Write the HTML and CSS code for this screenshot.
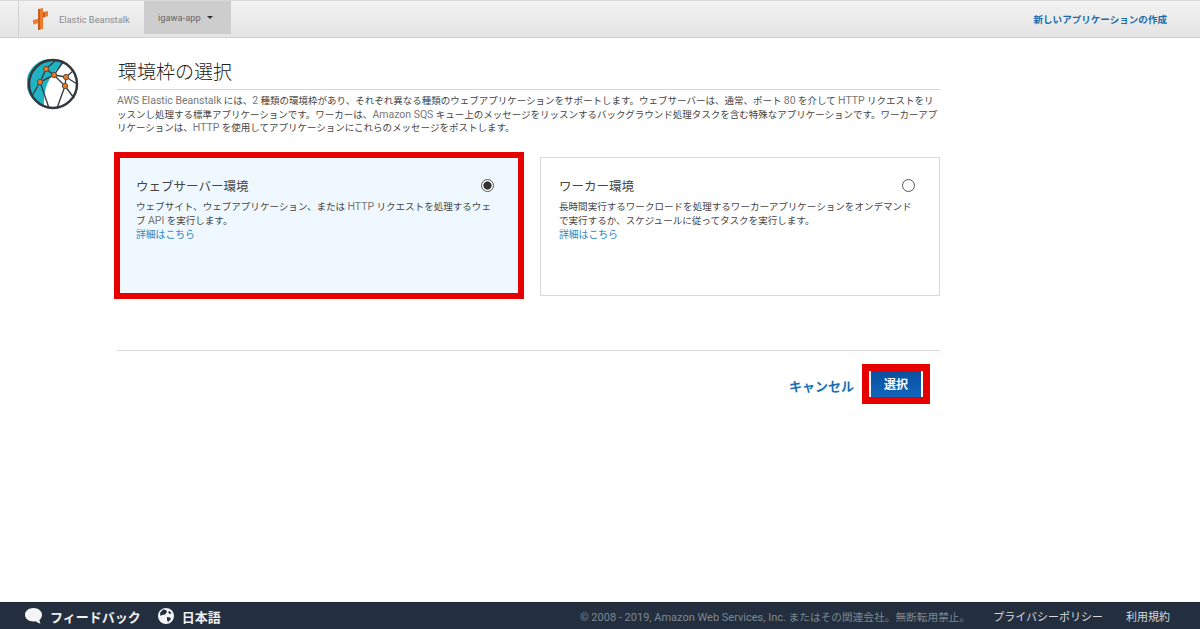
FILE: index.html
```html
<!DOCTYPE html>
<html lang="ja">
<head>
    <meta charset="UTF-8">
    <meta name="viewport" content="width=device-width, initial-scale=1.0">
    <title>環境枠の選択</title>
    <link rel="stylesheet" href="styles.css">
</head>
<body>
    <header class="top-bar">
        <div class="brand">
            <svg class="brand-logo" width="15" height="22" viewBox="0 0 15 22">
                <path fill="#ee7b2e" d="M5 1l5-1v4l5-1v5l-5 1.500V21l-5 1v-7l-4 1.500L0 15v-3l5-1z"/>
                <path fill="#c65f1e" d="M5 1l2 0v20.600L5 22zM10 4l2 .4v4.500L10 9.500z"/>
            </svg>
            <span class="brand-name">Elastic Beanstalk</span>
        </div>
        <div class="app-tab">igawa-app<span class="caret"></span></div>
        <a class="create-link" href="#">新しいアプリケーションの作成</a>
    </header>

    <main class="page">
        <svg class="globe" width="52" height="52" viewBox="0 0 52 52">
            <circle cx="26" cy="26" r="24" fill="#fff"/>
            <path fill="#1fb3c4" d="M37 5A24 24 0 1 0 17 48C17 35 18 20 37 5z"/>
            <g fill="none" stroke="#3a3f44" stroke-width="1.400">
                <path d="M28 3L19 11L27 17L39 19M19 11L13 24L27 17L38 28L39 19L46 13M39 19L50 26M38 28L47 40M38 28L30 50M13 24L5 38M13 24L22 50M27 17L36 4"/>
            </g>
            <circle cx="26" cy="26" r="24" fill="none" stroke="#33383d" stroke-width="2.500"/>
            <g fill="#ee7a22" stroke="#5b4a3a" stroke-width="1">
                <circle cx="19" cy="11" r="2.600"/>
                <circle cx="27" cy="17" r="2.600"/>
                <circle cx="39" cy="19" r="2.600"/>
                <circle cx="13" cy="24" r="2.600"/>
                <circle cx="38" cy="28" r="2.600"/>
            </g>
        </svg>

        <section class="content">
            <h1 class="title">環境枠の選択</h1>
            <p class="intro"><span class="en">AWS Elastic Beanstalk</span> には、<span class="en">2</span> 種類の環境枠があり、それぞれ異なる種類のウェブアプリケーションをサポートします。ウェブサーバーは、通常、ポート <span class="en">80</span> を介して <span class="en">HTTP</span> リクエストをリッスンし処理する標準アプリケーションです。ワーカーは、<span class="en">Amazon SQS</span> キュー上のメッセージをリッスンするバックグラウンド処理タスクを含む特殊なアプリケーションです。ワーカーアプリケーションは、<span class="en">HTTP</span> を使用してアプリケーションにこれらのメッセージをポストします。</p>

            <div class="tiers">
                <div class="tier tier-selected">
                    <div class="tier-head">
                        <h2 class="tier-name">ウェブサーバー環境</h2>
                        <span class="radio radio-on"></span>
                    </div>
                    <p class="tier-text">ウェブサイト、ウェブアプリケーション、または <span class="en">HTTP</span> リクエストを処理するウェブ <span class="en">API</span> を実行します。</p>
                    <a class="tier-link" href="#">詳細はこちら</a>
                </div>
                <div class="tier">
                    <div class="tier-head">
                        <h2 class="tier-name">ワーカー環境</h2>
                        <span class="radio"></span>
                    </div>
                    <p class="tier-text">長時間実行するワークロードを処理するワーカーアプリケーションをオンデマンドで実行するか、スケジュールに従ってタスクを実行します。</p>
                    <a class="tier-link" href="#">詳細はこちら</a>
                </div>
            </div>

            <div class="actions">
                <a class="cancel" href="#">キャンセル</a>
                <button class="select-button">選択</button>
            </div>
        </section>
    </main>

    <footer class="footer">
        <div class="footer-left">
            <span class="footer-item">
                <svg width="17" height="16" viewBox="0 0 17 16"><path fill="#f4f5f6" d="M8.500 0C13 0 17 2.800 17 6.800c0 2.200-1 4-2.600 5.200.2 1.400.6 2.700 1.100 3.600-1.800-.3-3.500-1.200-4.700-2.400-.7.2-1.500.3-2.300.3C3.800 13.500 0 10.800 0 6.800S3.800 0 8.500 0z"/></svg>
                フィードバック
            </span>
            <span class="footer-item">
                <svg width="16" height="16" viewBox="0 0 16 16"><circle cx="8" cy="8" r="8" fill="#f4f5f6"/><path fill="#232f3e" d="M5 1.500l3 .5 1 2-2 2.500-3 .5-1.500 1-.5-3zM9 9l3 .5 1 1.500-3 3-1-2zM11.500 3l2 2.500-2 .5-1.500-2z"/></svg>
                日本語
            </span>
        </div>
        <div class="footer-right">
            <span class="copyright"><span class="en-copy">© 2008 - 2019, Amazon Web Services, Inc.</span> またはその関連会社。無断転用禁止。</span>
            <a class="footer-link" href="#">プライバシーポリシー</a>
            <a class="footer-link" href="#">利用規約</a>
        </div>
    </footer>
</body>
</html>
```

FILE: styles.css
```css
* {
    box-sizing: border-box;
}
body {
    margin: 0;
    height: 100vh;
    display: flex;
    flex-direction: column;
    background: #fff;
    color: #444;
    font-family: Roboto, "Noto Sans CJK JP", sans-serif;
    overflow: hidden;
}
a {
    text-decoration: none;
}
.en {
    font-size: 10.500px;
    color: #777;
}

/* top bar */
.top-bar {
    height: 38px;
    flex: none;
    display: flex;
    align-items: stretch;
    padding-left: 18px;
    background: linear-gradient(#f2f2f2, #e4e4e4);
    border-top: 1px solid #d8d8d8;
    border-bottom: 1px solid #cfcfcf;
}
.brand {
    width: 126px;
    display: flex;
    align-items: center;
    gap: 11px;
    padding-left: 14px;
    border-left: 1px solid #d2d2d2;
}
.brand-name {
    font-size: 9.300px;
    color: #8b8b8b;
}
.app-tab {
    width: 87px;
    margin-bottom: 3px;
    padding-left: 14px;
    display: flex;
    align-items: center;
    gap: 6px;
    font-size: 9.300px;
    color: #666;
    background: #cdcdcd;
}
.caret {
    border: 3.500px solid transparent;
    border-top: 3.500px solid #333;
    border-bottom: 0;
}
.create-link {
    margin-left: auto;
    margin-right: 33px;
    align-self: center;
    font-size: 9.550px;
    font-weight: 700;
    color: #1b6ca8;
}

/* main area */
.page {
    flex: 1;
    display: flex;
    align-items: flex-start;
    padding: 20px 0 0 27px;
}
.globe {
    flex: none;
}
.content {
    width: 823px;
    margin-top: -1px;
    margin-left: 38px;
}
.title {
    margin: 0;
    height: 33px;
    padding-top: 2px;
    padding-left: 1px;
    font-size: 19px;
    line-height: 28px;
    font-weight: 300;
    color: #222;
    border-bottom: 1px solid #d5d5d5;
}
.intro {
    margin: 4px 0 0;
    font-size: 9.500px;
    line-height: 13.500px;
    color: #444;
}

/* tier cards */
.tiers {
    display: flex;
    gap: 22px;
    margin-top: 22px;
    padding-left: 3px;
}
.tier {
    width: 400px;
    height: 139px;
    padding: 19px 24px 19px 18px;
    background: #fff;
    border: 1px solid #d9d9d9;
}
.tier-selected {
    width: 398px;
    height: 135px;
    margin-top: 1px;
    padding: 19px 24px 19px 16px;
    background: #eff8ff;
    border: 0;
    outline: 6px solid #e60000;
}
.tier-head {
    display: flex;
    align-items: center;
    justify-content: space-between;
    height: 17px;
}
.tier-name {
    margin: 0;
    font-size: 12.500px;
    font-weight: 400;
    color: #444;
}
.radio {
    width: 13px;
    height: 13px;
    border: 1px solid #555;
    border-radius: 50%;
    background: #fff;
}
.radio-on {
    background: radial-gradient(circle, #333 0 3.800px, #fff 4.400px);
}
.tier-text {
    margin: 6px 0 0;
    font-size: 9.550px;
    line-height: 14px;
    color: #444;
}
.tier-link {
    display: block;
    font-size: 9.800px;
    line-height: 14px;
    color: #2e86c1;
}

/* bottom actions */
.actions {
    margin-top: 54px;
    height: 54px;
    display: flex;
    align-items: flex-start;
    justify-content: flex-end;
    padding: 20px 17px 0 0;
    border-top: 1px solid #d9d9d9;
}
.cancel {
    margin-top: 5px;
    margin-right: 15px;
    font-size: 13px;
    font-weight: 700;
    color: #1b6fb5;
}
.select-button {
    width: 54px;
    height: 26px;
    padding: 0;
    font-family: inherit;
    font-size: 12px;
    font-weight: 700;
    color: #fff;
    background: linear-gradient(#0a4f9e, #1166bb);
    border: 0;
    border-left: 2px solid #fff;
    border-right: 2px solid #fff;
    outline: 7px solid #e60000;
    cursor: pointer;
}

/* footer */
.footer {
    height: 27px;
    flex: none;
    display: flex;
    align-items: center;
    justify-content: space-between;
    padding: 0 30px 0 25px;
    background: #232f3e;
    border-top: 1px solid #1b2430;
}
.footer-left {
    display: flex;
    gap: 17px;
}
.footer-item {
    display: flex;
    align-items: center;
    gap: 8px;
    font-size: 13px;
    font-weight: 700;
    color: #eef0f2;
}
.footer-right {
    display: flex;
    align-items: center;
}
.copyright {
    font-size: 10.700px;
    color: #7d8791;
}
.en-copy {
    font-size: 11px;
}
.footer-link {
    margin-left: 23px;
    font-size: 11px;
    color: #d5d9dd;
}
```
